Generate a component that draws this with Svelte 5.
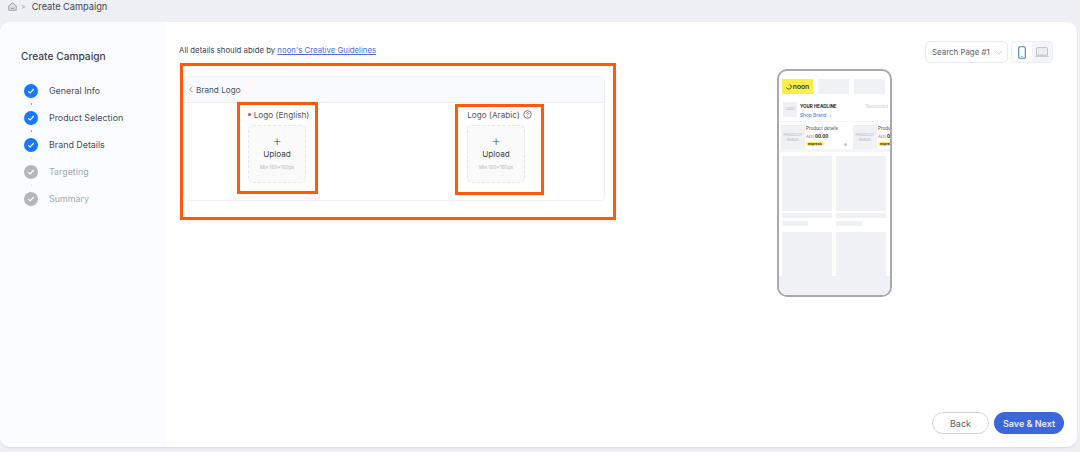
<script>
  const steps = [
    { label: "General Info", done: true },
    { label: "Product Selection", done: true },
    { label: "Brand Details", done: true },
    { label: "Targeting", done: false },
    { label: "Summary", done: false },
  ];
  const logos = [
    { label: "Logo (English)", required: true, hint: false },
    { label: "Logo (Arabic)", required: false, hint: true },
  ];
  const products = [0, 1];
</script>

<div class="page">
  <div class="crumbs">
    <svg class="home" width="9" height="9" viewBox="0 0 12 12" fill="none">
      <path d="M1 5 6 1l5 4v6H1z" fill="#dcdde2" stroke="#9a9ca5" stroke-width="1.200" />
      <path d="M4 8.500h4" stroke="#8d8f98" stroke-width="1.200" />
    </svg>
    <span class="sep">&gt;</span>
    <span class="crumb">Create Campaign</span>
  </div>

  <div class="card">
    <aside class="side">
      <h2>Create Campaign</h2>
      <ul>
        {#each steps as step, i}
          <li class:todo={!step.done}>
            <span class="dot">
              <svg width="8" height="8" viewBox="0 0 8 8" fill="none">
                <path d="M1.200 4.200 3.200 6 6.800 2" stroke="#fff" stroke-width="1.200" />
              </svg>
            </span>
            <span>{step.label}</span>
            {#if i < steps.length - 1}<i class="link"></i>{/if}
          </li>
        {/each}
      </ul>
    </aside>

    <main class="main">
      <div class="left">
        <p class="note">All details should abide by <a href="#top">noon's Creative Guidelines</a></p>
        <section class="panel">
          <header>
            <svg width="4" height="7" viewBox="0 0 4 7" fill="none"><path d="M3.500.6.800 3.500l2.700 2.900" stroke="#7d808a" stroke-width="0.800" /></svg>
            Brand Logo
          </header>
          <div class="logos">
            {#each logos as logo}
              <div class="logo">
                <div class="name">
                  {#if logo.required}<span class="req"></span>{/if}
                  {logo.label}
                  {#if logo.hint}
                    <svg width="9" height="9" viewBox="0 0 9 9" fill="none">
                      <circle cx="4.500" cy="4.500" r="3.800" stroke="#555a66" stroke-width="0.800" />
                      <path d="M3.400 3.600c0-1.400 2.200-1.400 2.200 0 0 .8-1.100.8-1.100 1.600M4.500 6v.7" stroke="#555a66" stroke-width="0.700" />
                    </svg>
                  {/if}
                </div>
                <div class="drop">
                  <span class="plus">+</span>
                  <span class="up">Upload</span>
                  <span class="min">Min 160x160px</span>
                </div>
              </div>
            {/each}
          </div>
        </section>
        <div class="mark mark-panel"></div>
        <div class="mark mark-en"></div>
        <div class="mark mark-ar"></div>
      </div>

      <div class="phone">
        <div class="tabs">
          <div class="brand">
            <svg width="6" height="6" viewBox="0 0 6 6" fill="none">
              <path d="M3.600.6C5.200 1 5.600 2.400 5.200 3.500 4.700 5 2.500 5.600 1.300 4.600.8 4.200.6 3.800.5 3.300" stroke="#222" stroke-width="0.800" />
            </svg>
            noon
          </div>
          <div class="tab"></div>
          <div class="tab"></div>
        </div>
        <div class="ad">
          <div class="ad-head">
            <div class="ad-logo">LOGO</div>
            <div class="ad-text">
              <b>YOUR HEADLINE</b>
              <span>Shop Brand &nbsp;›</span>
            </div>
            <em>Sponsored</em>
          </div>
          <div class="ad-products">
            {#each products as p}
              <div class="prod">
                <div class="prod-img">PRODUCT<br />IMAGE</div>
                <div class="prod-info">
                  <span>Product details</span>
                  <span class="price"><small>AED</small> <b>00.00</b></span>
                  <span class="exp">express</span>
                </div>
                {#if p === 0}<i class="cart"></i>{/if}
              </div>
            {/each}
          </div>
        </div>
        <div class="grid">
          <div class="tile"><div class="img"></div><div class="bar"></div><div class="bar short"></div></div>
          <div class="tile"><div class="img"></div><div class="bar"></div><div class="bar short"></div></div>
          <div class="tile"><div class="img low"></div></div>
          <div class="tile"><div class="img low"></div></div>
        </div>
        <div class="foot"></div>
      </div>

      <div class="right">
        <div class="controls">
          <div class="select">
            Search Page #1
            <svg width="8" height="5" viewBox="0 0 8 5" fill="none"><path d="M.7.7 4 4 7.300.7" stroke="#c4c6cc" stroke-width="0.900" /></svg>
          </div>
          <div class="toggle">
            <span class="on">
              <svg width="8" height="13" viewBox="0 0 8 13" fill="none">
                <rect x="0.700" y="0.700" width="6.600" height="11.600" rx="1.300" stroke="#3f7fc4" stroke-width="1.100" />
                <path d="M3.300 10.500h1.400" stroke="#3f7fc4" stroke-width="0.800" />
              </svg>
            </span>
            <span class="off">
              <svg width="14" height="10" viewBox="0 0 14 10" fill="none">
                <rect x="1.500" y="0.600" width="11" height="7.600" rx="0.800" fill="#eceef1" stroke="#b9bbc1" stroke-width="0.900" />
                <path d="M0.300 9.200h13.400" stroke="#b9bbc1" stroke-width="1" />
              </svg>
            </span>
          </div>
        </div>
        <div class="actions">
          <button class="back">Back</button>
          <button class="next">Save &amp; Next</button>
        </div>
      </div>
    </main>
  </div>
</div>

<style>
  :global(body) {
    margin: 0;
    background: #eff0f5;
    font-family: Inter, "Liberation Sans", sans-serif;
    color: #3a3f4b;
  }
  .page {
    width: 1080px;
    height: 452px;
    overflow: hidden;
  }
  .crumbs {
    height: 22px;
    box-sizing: border-box;
    padding: 0 0 10px 8px;
    display: flex;
    align-items: center;
    font-size: 9.200px;
    color: #40444f;
  }
  .sep { color: #8b8e97; font-size: 7px; margin: 0 6px 0 4px; }
  .card {
    width: 1077px;
    height: 425px;
    background: #fff;
    border-radius: 10px;
    display: flex;
    overflow: hidden;
    box-shadow: 0 1px 2px rgba(60, 64, 80, 0.12);
  }
  .side {
    width: 165px;
    flex: none;
    background: #fbfcff;
    padding: 27px 0 0 21px;
    box-sizing: border-box;
  }
  h2 {
    margin: 0 0 14px;
    font-size: 10.200px;
    line-height: 14px;
    font-weight: 500;
    color: #3c414e;
  }
  ul {
    list-style: none;
    margin: 0;
    padding: 0 0 0 3px;
  }
  li {
    position: relative;
    height: 27px;
    display: flex;
    align-items: center;
    gap: 11px;
    font-size: 8.900px;
    color: #474c58;
  }
  li.todo { color: #a5a8b0; }
  .dot {
    width: 14px;
    height: 14px;
    border-radius: 50%;
    background: #1677ff;
    display: flex;
    align-items: center;
    justify-content: center;
  }
  .todo .dot { background: #b5b6ba; }
  .link {
    position: absolute;
    left: 7px;
    top: 26px;
    width: 1px;
    height: 2px;
    background: #6aa6f8;
  }
  li:nth-child(n + 3) .link { background: #e6e7ea; }
  .main {
    flex: 1;
    display: flex;
    min-width: 0;
  }
  .left {
    position: relative;
    width: 436px;
    margin-left: 15px;
    flex: none;
  }
  .note {
    margin: 0 0 0 -1px;
    padding-top: 23px;
    font-size: 7.800px;
    line-height: 10px;
    color: #3f434e;
  }
  a { color: #4a6fd8; }
  .panel {
    margin: 21px 11px 0 3px;
    height: 125px;
    border: 1px solid #eff0f3;
    border-radius: 5px;
    box-sizing: border-box;
  }
  header {
    height: 26px;
    background: #f9fafd;
    border-bottom: 1px solid #eff0f3;
    border-radius: 5px 5px 0 0;
    padding-left: 5px;
    box-sizing: border-box;
    display: flex;
    align-items: center;
    gap: 3px;
    font-size: 8.200px;
    color: #4b505c;
  }
  .logos {
    display: flex;
    padding: 5px 0 0 62px;
    gap: 157px;
  }
  .logo {
    width: 62px;
    display: flex;
    flex-direction: column;
    align-items: center;
  }
  .name {
    height: 13px;
    margin-left: 3px;
    display: flex;
    align-items: center;
    gap: 3px;
    white-space: nowrap;
    font-size: 8.200px;
    color: #50555f;
  }
  .logo:last-child .name { margin-left: 7px; }
  .req {
    width: 3px;
    height: 3px;
    border-radius: 50%;
    background: #e8405a;
  }
  .drop {
    margin-top: 4px;
    width: 58px;
    height: 58px;
    flex: none;
    box-sizing: border-box;
    border: 1px dashed #e6e7ea;
    border-radius: 5px;
    background: #fafafa;
    display: flex;
    flex-direction: column;
    align-items: center;
    padding-top: 8px;
  }
  .plus { font-size: 15px; line-height: 14px; font-weight: 200; color: #3c3f46; }
  .up { font-size: 8.200px; line-height: 12px; margin-top: 0; color: #41454f; }
  .min { font-size: 4.800px; line-height: 8px; margin-top: 3px; color: #b4b6bb; white-space: nowrap; }
  .mark {
    position: absolute;
    border: 3px solid #ff5a0a;
    box-sizing: border-box;
    pointer-events: none;
  }
  .mark-panel { left: 0; top: 41px; width: 436px; height: 157px; }
  .mark-en { left: 57px; top: 80px; width: 81px; height: 92px; }
  .mark-ar { left: 275px; top: 82px; width: 89px; height: 91px; }

  .phone {
    margin: 47px 0 0 161px;
    width: 115px;
    height: 228px;
    box-sizing: border-box;
    border: 2px solid #a9a9ab;
    border-radius: 10px;
    overflow: hidden;
    flex: none;
    display: flex;
    flex-direction: column;
    background: #fff;
  }
  .tabs {
    display: flex;
    gap: 5px;
    padding: 8px 0 0 3px;
    height: 31px;
    box-sizing: border-box;
    flex: none;
  }
  .brand {
    width: 31px;
    height: 15px;
    background: #ffee4a;
    display: flex;
    align-items: center;
    justify-content: center;
    gap: 1px;
    font-size: 6.800px;
    font-weight: 500;
    color: #222;
  }
  .tab { width: 31px; height: 15px; background: #f0f1f5; }
  .ad {
    border-bottom: 3px solid #f5f6f8;
    flex: none;
    height: 50px;
    box-sizing: border-box;
    overflow: hidden;
  }
  .ad-head {
    display: flex;
    height: 19px;
    padding-left: 4px;
    gap: 3px;
    border-bottom: 1px solid #f3f4f6;
    position: relative;
  }
  .ad-logo {
    width: 14px;
    height: 15px;
    background: #f0f1f5;
    font-size: 3.500px;
    line-height: 15px;
    text-align: center;
    color: #a9abb2;
  }
  .ad-text { display: flex; flex-direction: column; font-size: 4.500px; line-height: 8px; padding-top: 1px; }
  .ad-text b { color: #222; font-weight: 700; }
  .ad-text span { color: #3b6fd8; font-size: 4.800px; }
  .ad-head em {
    position: absolute;
    right: 2px;
    top: 2px;
    font-style: normal;
    font-size: 4.400px;
    color: #c8cad0;
  }
  .ad-products {
    display: flex;
    padding: 3px 0 0 2px;
  }
  .prod {
    width: 72px;
    flex: none;
    display: flex;
    gap: 1px;
    position: relative;
  }
  .prod-img {
    width: 24px;
    height: 24px;
    flex: none;
    background: #f0f1f5;
    color: #b3b5bb;
    font-size: 3.900px;
    line-height: 5px;
    text-align: center;
    padding-top: 7px;
    box-sizing: border-box;
  }
  .prod-info { display: flex; flex-direction: column; align-items: flex-start; font-size: 4.500px; line-height: 8px; white-space: nowrap; }
  .price { color: #222; }
  .price small { font-size: 3.800px; color: #777; }
  .exp {
    background: #ffee4a;
    font-size: 3.500px;
    line-height: 4px;
    padding: 0 2px;
    border-radius: 2px;
    font-weight: 700;
    color: #333;
    margin-top: 1px;
  }
  .cart {
    position: absolute;
    right: 6px;
    bottom: 3px;
    width: 3px;
    height: 3px;
    background: #c4c6cc;
    border-radius: 50%;
  }
  .grid {
    display: grid;
    grid-template-columns: 50px 50px;
    gap: 6px 4px;
    padding: 4px 0 0 3px;
    flex: 1;
    min-height: 0;
    align-content: start;
  }
  .img { height: 55px; background: #f0f1f5; }
  .img.low { height: 45px; }
  .bar { height: 5px; margin-top: 2px; background: #f0f1f5; }
  .bar.short { width: 26px; margin-top: 3px; }
  .foot { height: 19px; background: #f0f1f5; flex: none; }

  .right {
    flex: 1;
    min-width: 0;
    display: flex;
    flex-direction: column;
    justify-content: space-between;
    align-items: flex-end;
    padding: 19px 13px 13px 0;
  }
  .controls { display: flex; gap: 3px; margin-right: 11px; }
  .select {
    width: 83px;
    height: 22px;
    box-sizing: border-box;
    border: 1px solid #e9eaed;
    border-radius: 5px;
    display: flex;
    align-items: center;
    gap: 5px;
    padding-left: 6px;
    font-size: 7.900px;
    color: #5a5e68;
    white-space: nowrap;
  }
  .toggle {
    width: 42px;
    height: 22px;
    box-sizing: border-box;
    border: 1px solid #eceef3;
    border-radius: 4px;
    display: flex;
    overflow: hidden;
  }
  .toggle span {
    flex: 1;
    display: flex;
    align-items: center;
    justify-content: center;
  }
  .off { background: #f4f5f9; }
  .actions { display: flex; gap: 5px; }
  button {
    height: 22px;
    border-radius: 11px;
    font-family: inherit;
    font-size: 9px;
    padding: 0;
  }
  .back {
    width: 57px;
    background: #fff;
    border: 1px solid #d4d6dc;
    color: #5b5f69;
  }
  .next {
    width: 70px;
    background: #3b66dc;
    border: none;
    color: #e9eeff;
    font-weight: 600;
  }
</style>
